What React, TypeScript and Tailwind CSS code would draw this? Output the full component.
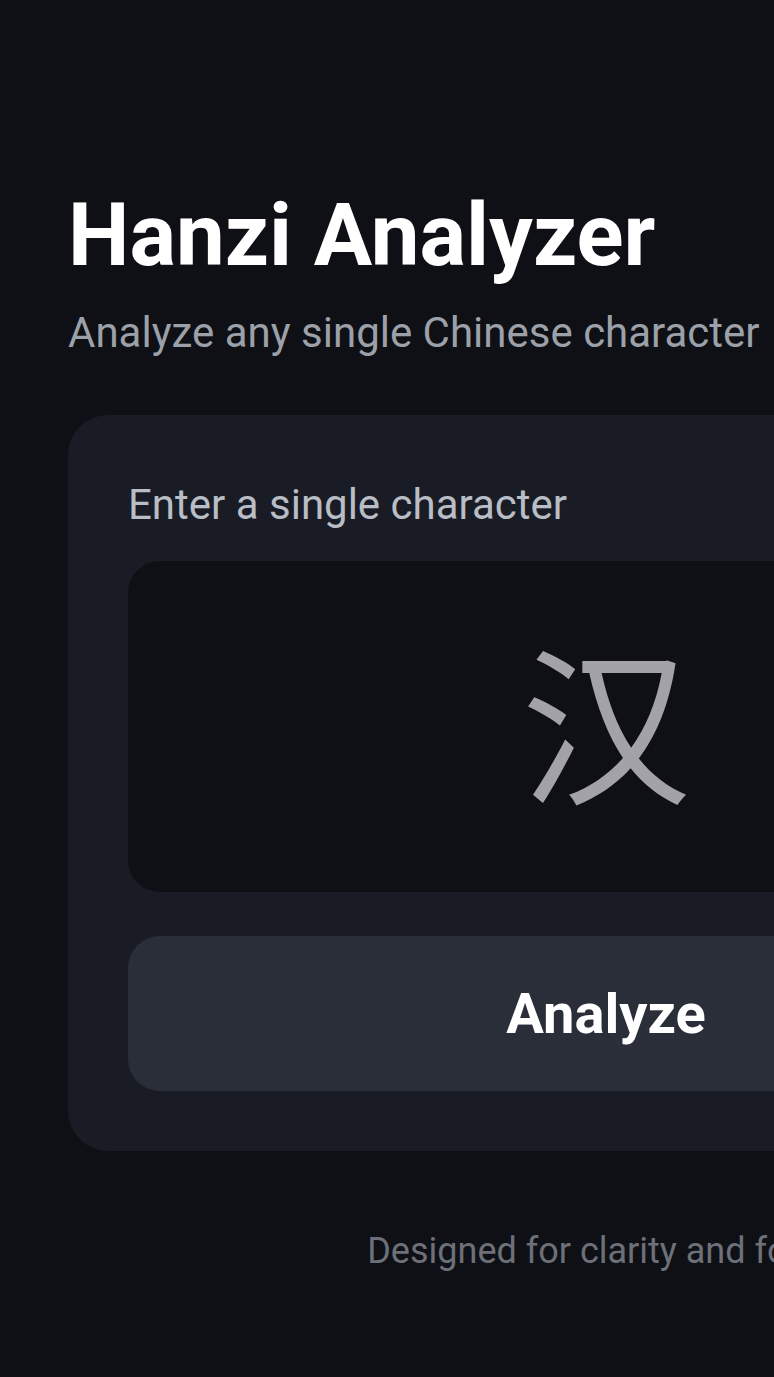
import React from "react";

export default function App() {
  return (
    <div
      className="min-h-screen w-full overflow-hidden bg-[#0e1015]"
      style={{ fontFamily: "Roboto, 'Noto Sans CJK SC', sans-serif" }}
    >
      <div className="ml-[68px] w-[1076px] pt-[185px] pb-[100px]">
        <h1 className="text-[87px] font-bold leading-[1.15] text-white">Hanzi Analyzer</h1>
        <p className="mt-[21px] text-[42px] leading-[1.3] text-[#9ca0a8]">
          Analyze any single Chinese character
        </p>
        <div className="mt-[54px] rounded-[40px] bg-[#191c24] px-[60px] pt-[63px] pb-[60px]">
          <label className="block text-[42px] leading-[1.3] text-[#b9bdc6]">Enter a single character</label>
          <div className="mt-[29px] flex h-[331px] items-center justify-center rounded-[32px] bg-[#0e1015] pb-[18px]">
            <span
              className="text-[170px] leading-none text-[#a2a2a8]"
              style={{ fontFamily: "'Noto Sans CJK SC', sans-serif" }}
            >
              汉
            </span>
          </div>
          <button className="mt-[44px] flex h-[155px] w-full items-center justify-center rounded-[32px] bg-[#2a2e38] text-[56px] font-bold text-white">
            Analyze
          </button>
        </div>
        <p className="mt-[77px] text-center text-[36px] leading-[1.3] text-[#6d7079]">Designed for clarity and focus</p>
      </div>
    </div>
  );
}
